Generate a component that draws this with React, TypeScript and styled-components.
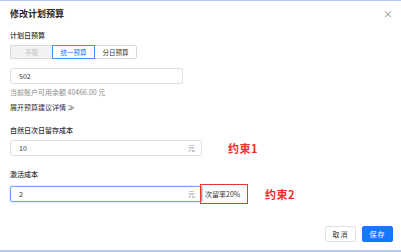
import React from "react";
import styled, { createGlobalStyle } from "styled-components";

const Global = createGlobalStyle`
  html, body { margin: 0; padding: 0; background: #fff; }
  body { font-family: "Noto Sans CJK SC", "Noto Sans", sans-serif; }
`;

export default function App() {
  return (
    <Modal>
      <Global />
      <Header>
        <Title>修改计划预算</Title>
        <Close>×</Close>
      </Header>
      <Body>
        <Label>计划日预算</Label>
        <Segments>
          <Segment disabled>不限</Segment>
          <Segment active>统一预算</Segment>
          <Segment>分日预算</Segment>
        </Segments>
        <Input $width={173}>502</Input>
        <Hint>当前账户可用余额 40466.00 元</Hint>
        <Expand>展开预算建议详情 ≫</Expand>

        <Field>
          <Label>自然日次日留存成本</Label>
          <Row>
            <Input $width={192}>
              10<Suffix>元</Suffix>
            </Input>
            <Note>约束1</Note>
          </Row>
        </Field>

        <Field>
          <Label>激活成本</Label>
          <Row>
            <Input $width={192} focused>
              2<Suffix>元</Suffix>
            </Input>
            <Addon>次留率20%</Addon>
            <Note $offset={17}>约束2</Note>
          </Row>
        </Field>
      </Body>
      <Footer>
        <Button>取消</Button>
        <Button primary>保存</Button>
      </Footer>
    </Modal>
  );
}

const Modal = styled.div`
  box-sizing: border-box;
  width: 401px;
  height: 252px;
  border-top: 1px solid #b3c8f3;
  border-bottom: 2px solid #b3c8f3;
  display: flex;
  flex-direction: column;
  color: #262626;
`;

const Header = styled.div`
  display: flex;
  justify-content: space-between;
  align-items: center;
  padding: 6px 8px 0 10px;
  height: 13px;
`;

const Title = styled.div`
  font-size: 9px;
  font-weight: 600;
  color: #262626;
`;

const Close = styled.div`
  font-size: 10px;
  color: #8c8c8c;
  line-height: 1;
`;

const Body = styled.div`
  padding: 10px 10px 0 10px;
  display: flex;
  flex-direction: column;
  align-items: flex-start;
`;

const Label = styled.div`
  font-size: 7px;
  line-height: 10px;
  color: #333;
  font-weight: 500;
  margin-bottom: 5px;
`;

const Segments = styled.div`
  display: flex;
  margin-bottom: 9px;
`;

const Segment = styled.div<{ active?: boolean; disabled?: boolean }>`
  box-sizing: border-box;
  width: 43px;
  height: 14px;
  font-size: 6.5px;
  display: flex;
  align-items: center;
  justify-content: center;
  border: 1px solid ${(p) => (p.active ? "#4a8ef8" : "#d9d9d9")};
  margin-left: -1px;
  position: relative;
  z-index: ${(p) => (p.active ? 1 : 0)};
  background: ${(p) => (p.disabled ? "#f2f2f2" : "#fff")};
  color: ${(p) => (p.active ? "#1677ff" : p.disabled ? "#bfbfbf" : "#333")};
  &:first-child { margin-left: 0; border-radius: 2px 0 0 2px; }
  &:last-child { border-radius: 0 2px 2px 0; }
`;

const Input = styled.div<{ $width: number; focused?: boolean }>`
  box-sizing: border-box;
  width: ${(p) => p.$width}px;
  height: 16px;
  border: 1px solid ${(p) => (p.focused ? "#74a6f7" : "#e0e0e0")};
  border-radius: 2px;
  box-shadow: ${(p) => (p.focused ? "0 0 0 1px rgba(22,119,255,0.12)" : "none")};
  font-size: 7px;
  color: #333;
  padding: 0 6px 0 8px;
  display: flex;
  align-items: center;
  justify-content: space-between;
  background: #fff;
`;

const Suffix = styled.span`
  color: #999;
  font-size: 7px;
`;

const Hint = styled.div`
  font-size: 7px;
  color: #8c8c8c;
  margin-top: 3px;
  line-height: 10px;
`;

const Expand = styled.div`
  font-size: 7px;
  color: #333;
  margin-top: 5px;
  line-height: 10px;
`;

const Field = styled.div`
  margin-top: 13px;
  display: flex;
  flex-direction: column;
  align-items: flex-start;
`;

const Row = styled.div`
  display: flex;
  align-items: center;
`;

const Note = styled.div<{ $offset?: number }>`
  color: #f0302a;
  font-size: 11px;
  font-weight: 700;
  margin-left: ${(p) => p.$offset ?? 26}px;
  letter-spacing: 0.5px;
`;

const Addon = styled.div`
  box-sizing: border-box;
  height: 20px;
  width: 48px;
  margin-left: -2px;
  border: 1.5px solid #e8372c;
  font-size: 7px;
  color: #333;
  display: flex;
  align-items: center;
  padding-left: 4px;
  position: relative;
  &::before {
    content: "";
    position: absolute;
    left: 1px;
    top: 1px;
    bottom: 1px;
    width: 1px;
    background: #d0d0d0;
  }
`;

const Footer = styled.div`
  margin-top: auto;
  display: flex;
  justify-content: flex-end;
  gap: 6px;
  padding: 0 8px 8px 0;
`;

const Button = styled.div<{ primary?: boolean }>`
  box-sizing: border-box;
  width: 31px;
  height: 16px;
  border-radius: 2px;
  font-size: 7px;
  letter-spacing: 1px;
  display: flex;
  align-items: center;
  justify-content: center;
  border: 1px solid ${(p) => (p.primary ? "#1677ff" : "#e0e0e0")};
  background: ${(p) => (p.primary ? "#1677ff" : "#fff")};
  color: ${(p) => (p.primary ? "#fff" : "#333")};
`;
